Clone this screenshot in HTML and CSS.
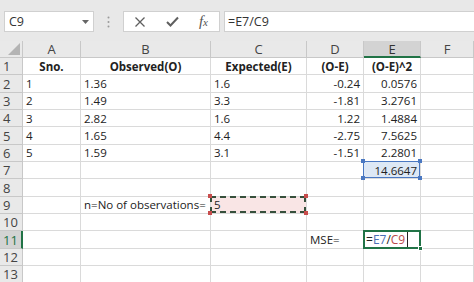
FILE: index.html
```html
<!DOCTYPE html>
<html>
<head>
<meta charset="utf-8">
<link rel="stylesheet" href="styles.css">
</head>
<body>
<div class="toolbar">
  <div class="namebox"><span>C9</span><svg class="dd" width="7" height="4" viewBox="0 0 7 4"><path d="M0 0H7L3.5 4Z" fill="#666"/></svg></div>
  <div class="dots"><svg width="3" height="12" viewBox="0 0 3 12"><circle cx="1.5" cy="1.5" r="1" fill="#9a9a9a"/><circle cx="1.5" cy="6" r="1" fill="#9a9a9a"/><circle cx="1.5" cy="10.5" r="1" fill="#9a9a9a"/></svg></div>
  <div class="fxbtns">
    <svg width="12" height="12" viewBox="0 0 12 12"><path d="M1.5 1.5L10.5 10.5M10.5 1.5L1.5 10.5" stroke="#5f5f5f" stroke-width="1.3"/></svg>
    <svg width="13" height="11" viewBox="0 0 13 11"><path d="M1 6L4.5 9.5L12 1.5" stroke="#5f5f5f" stroke-width="2" fill="none"/></svg>
    <span class="fx">f<span class="x">x</span></span>
  </div>
  <div class="formula">=E7/C9</div>
</div>
<div class="sheet">
  <div class="corner"><svg width="12" height="12" viewBox="0 0 12 12"><path d="M12 0V12H0Z" fill="#b4b4b4"/></svg></div>
  <div class="ch">A</div><div class="ch">B</div><div class="ch">C</div><div class="ch">D</div><div class="ch sel">E</div><div class="ch">F</div>

  <div class="rh">1</div><div class="c b ctr">Sno.</div><div class="c b ctr">Observed(O)</div><div class="c b ctr">Expected(E)</div><div class="c b ctr">(O-E)</div><div class="c b ctr">(O-E)^2</div><div class="c"></div>
  <div class="rh">2</div><div class="c">1</div><div class="c">1.36</div><div class="c">1.6</div><div class="c r">-0.24</div><div class="c r">0.0576</div><div class="c"></div>
  <div class="rh">3</div><div class="c">2</div><div class="c">1.49</div><div class="c">3.3</div><div class="c r">-1.81</div><div class="c r">3.2761</div><div class="c"></div>
  <div class="rh">4</div><div class="c">3</div><div class="c">2.82</div><div class="c">1.6</div><div class="c r">1.22</div><div class="c r">1.4884</div><div class="c"></div>
  <div class="rh">5</div><div class="c">4</div><div class="c">1.65</div><div class="c">4.4</div><div class="c r">-2.75</div><div class="c r">7.5625</div><div class="c"></div>
  <div class="rh">6</div><div class="c">5</div><div class="c">1.59</div><div class="c">3.1</div><div class="c r">-1.51</div><div class="c r">2.2801</div><div class="c"></div>
  <div class="rh">7</div><div class="c"></div><div class="c"></div><div class="c"></div><div class="c"></div><div class="c r ref-blue">14.6647<i class="h h1"></i><i class="h h2"></i><i class="h h3"></i><i class="h h4"></i></div><div class="c"></div>
  <div class="rh">8</div><div class="c"></div><div class="c"></div><div class="c"></div><div class="c"></div><div class="c"></div><div class="c"></div>
  <div class="rh">9</div><div class="c"></div><div class="c">n=No of observations=</div><div class="c ref-red">5<i class="h h1"></i><i class="h h2"></i><i class="h h3"></i><i class="h h4"></i></div><div class="c"></div><div class="c"></div><div class="c"></div>
  <div class="rh">10</div><div class="c"></div><div class="c"></div><div class="c"></div><div class="c"></div><div class="c"></div><div class="c"></div>
  <div class="rh sel">11</div><div class="c"></div><div class="c"></div><div class="c"></div><div class="c">MSE=</div><div class="c active">=<span class="blue">E7</span>/<span class="red">C9</span><span class="caret"></span><i class="fh"></i></div><div class="c"></div>
  <div class="rh">12</div><div class="c"></div><div class="c"></div><div class="c"></div><div class="c"></div><div class="c"></div><div class="c"></div>
  <div class="rh">13</div><div class="c"></div><div class="c"></div><div class="c"></div><div class="c"></div><div class="c"></div><div class="c"></div>
</div>
</body>
</html>
```
FILE: styles.css
```css
* { box-sizing: border-box; }
html, body { margin: 0; padding: 0; background: #fff; overflow: hidden; }
body { width: 474px; height: 282px; font-family: "Open Sans", "Liberation Sans", sans-serif; color: #222; }

.toolbar {
  height: 41px;
  background: #e8e8e8;
  display: flex;
  align-items: flex-start;
  padding: 11px 0 0 4px;
}
.namebox {
  width: 90px;
  height: 21px;
  background: #fff;
  border: 1px solid #d0d0d0;
  display: flex;
  align-items: center;
  justify-content: space-between;
  padding: 0 4px 0 4px;
  font-size: 12.5px;
  color: #333;
}
.dots { width: 29px; height: 21px; display: flex; align-items: center; justify-content: center; }
.fxbtns {
  width: 97px;
  height: 21px;
  background: #fff;
  border: 1px solid #d0d0d0;
  display: flex;
  align-items: center;
  justify-content: space-between;
  padding: 0 11px 0 10px;
}
.fx { font-family: "Liberation Serif", serif; font-style: italic; font-size: 15px; color: #555; line-height: 1; }
.fx .x { font-size: 11px; }
.formula {
  flex: 1;
  margin-left: 4px;
  height: 21px;
  background: #fff;
  border: 1px solid #d0d0d0;
  border-right: none;
  font-size: 12.5px;
  line-height: 19px;
  padding-left: 3px;
  color: #333;
}

.sheet {
  display: grid;
  grid-template-columns: 23px 58px 130px 96px 57px 57px 1fr;
  grid-template-rows: 17px repeat(13, 17.35px);
  font-size: 11.5px;
}
.corner, .ch, .rh {
  background: #e9e9e9;
  color: #444;
  border-right: 1px solid #c8c8c8;
  border-bottom: 1px solid #c8c8c8;
  display: flex;
  align-items: center;
  justify-content: center;
  font-size: 13px;
}
.corner { justify-content: flex-end; align-items: flex-end; padding: 0 2px 2px 0; }
.ch.sel { background: #d3d3d3; border-bottom: 2px solid #217346; color: #333; }
.rh { justify-content: flex-start; padding-left: 3px; }
.rh.sel { background: #d3d3d3; border-right: 2px solid #217346; color: #217346; }

.c {
  border-right: 1px solid #dadada;
  border-bottom: 1px solid #dadada;
  display: flex;
  align-items: center;
  padding: 0 3px;
  white-space: nowrap;
  position: relative;
}
.c.b { font-weight: 700; }
.c.ctr { justify-content: center; }
.c.r { justify-content: flex-end; }

.ref-blue { background: #dde8f5; }
.ref-blue::after {
  content: "";
  position: absolute;
  left: -1px; top: -1px; right: 0; bottom: 0;
  border: 1px solid #4a78c2;
}
.ref-blue .h { background: #4a78c2; }
.ref-red { background: #f9e5e5; }
.ref-red::after {
  content: "";
  position: absolute;
  left: -1px; top: -1px; right: 0; bottom: 0;
  border: 2px dashed #36503c;
}
.ref-red .h { background: #c84c4c; }
.h { position: absolute; width: 4px; height: 4px; z-index: 2; }
.h1 { left: -3px; top: -3px; }
.h2 { right: -2px; top: -3px; }
.h3 { left: -3px; bottom: -2px; }
.h4 { right: -2px; bottom: -2px; }

.active { font-size: 12px; padding-left: 2px; }
.active::after {
  content: "";
  position: absolute;
  left: -1px; top: -1px; right: -1px; bottom: -1px;
  border: 2px solid #217346;
}
.active .blue { color: #4a6fb5; }
.active .red { color: #b94a4a; }
.caret { display: inline-block; width: 1px; height: 17px; background: #222; margin-left: 2px; }
.fh { position: absolute; right: -3px; bottom: -3px; width: 5px; height: 5px; background: #217346; border: 1px solid #fff; z-index: 2; }
```
